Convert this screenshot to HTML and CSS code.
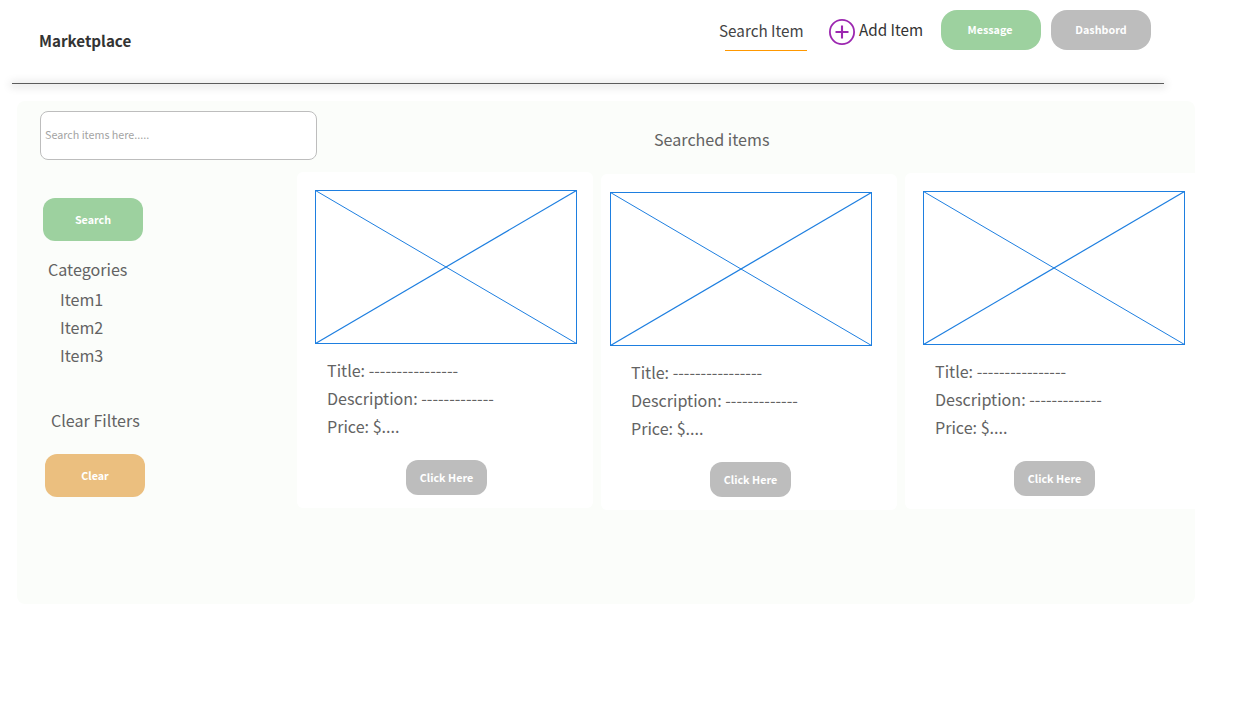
FILE: index.html
```html
<!DOCTYPE html>
<html lang="en">
<head>
<meta charset="utf-8">
<title>Marketplace</title>
<link rel="stylesheet" href="styles.css">
</head>
<body>
<header class="header">
  <h1 class="brand">Marketplace</h1>
  <nav class="nav">
    <a class="nav-search">Search Item</a>
    <a class="nav-add">
      <svg class="plus" width="26" height="26" viewBox="0 0 26 26" fill="none" stroke="#9c27b0"><circle cx="13" cy="13" r="12.1" stroke-width="1.8"/><path d="M13 6.5v13M6.5 13h13" stroke-width="2.1"/></svg>
      <span class="add-label">Add Item</span>
    </a>
    <button class="btn btn-nav btn-message green">Message</button>
    <button class="btn btn-nav gray">Dashbord</button>
  </nav>
</header>
<div class="rule"></div>
<main class="panel">
  <div class="topbar">
    <input class="search-box" type="text" placeholder="Search items here.....">
    <h2 class="heading">Searched items</h2>
  </div>
  <div class="content">
    <aside class="sidebar">
      <button class="btn btn-side green">Search</button>
      <h3 class="side-title">Categories</h3>
      <ul class="items"><li>Item1</li><li>Item2</li><li>Item3</li></ul>
      <h3 class="side-title clear-title">Clear Filters</h3>
      <button class="btn btn-side orange">Clear</button>
    </aside>
    <section class="cards">
      <article class="card">
        <svg class="image" viewBox="0 0 262 154"><rect x=".5" y=".5" width="261" height="153"/><path d="M.5.5l261 153"/><path class="rising" d="M.5 153.5L261.5.5"/></svg>
        <div class="info"><p>Title: ----------------</p><p>Description: -------------</p><p>Price: $....</p></div>
        <button class="btn btn-card gray">Click Here</button>
      </article>
      <article class="card card-second">
        <svg class="image" viewBox="0 0 262 154"><rect x=".5" y=".5" width="261" height="153"/><path d="M.5.5l261 153"/><path class="rising" d="M.5 153.5L261.5.5"/></svg>
        <div class="info"><p>Title: ----------------</p><p>Description: -------------</p><p>Price: $....</p></div>
        <button class="btn btn-card gray">Click Here</button>
      </article>
      <article class="card card-third">
        <svg class="image" viewBox="0 0 262 154"><rect x=".5" y=".5" width="261" height="153"/><path d="M.5.5l261 153"/><path class="rising" d="M.5 153.5L261.5.5"/></svg>
        <div class="info"><p>Title: ----------------</p><p>Description: -------------</p><p>Price: $....</p></div>
        <button class="btn btn-card gray">Click Here</button>
      </article>
    </section>
  </div>
</main>
</body>
</html>
```
FILE: styles.css
```css
* { box-sizing: border-box; }
body { margin: 0; background: #fff; color: #636363; font: 16.1px/28px "Noto Sans CJK SC", sans-serif; }
h1, h2, h3, p, ul { margin: 0; padding: 0; font-size: inherit; font-weight: 400; }
ul { list-style: none; }
.header { display: flex; justify-content: space-between; width: 1152px; height: 83px; margin-left: 12px; padding: 10px 13px 0 27px; }
.rule { width: 1152px; height: 1px; margin-left: 12px; background: #5c5c5c; box-shadow: 0 1px 8px 2px rgba(0,0,0,.13); }
.brand { margin-top: 16px; color: #333; font-size: 15.2px; font-weight: 700; }
.nav { display: flex; align-items: flex-start; color: #444; font-size: 15.25px; }
.nav-search { width: 110px; margin-top: 6px; white-space: nowrap; }
.nav-search::after { content: ""; display: block; width: 82px; height: 1px; margin: 6px 0 0 5.5px; background: #ff9800; }
.nav-add { display: flex; width: 112px; color: #333; }
.plus { flex: none; margin-top: 9px; }
.add-label { margin: 5px 0 0 4px; white-space: nowrap; }
.btn { display: flex; align-items: center; justify-content: center; padding: 0; border: 0; border-radius: 12px; color: #fff; font: 700 10.74px/16px "Noto Sans CJK SC", sans-serif; white-space: nowrap; }
.btn-nav { width: 100px; height: 40px; padding-bottom: 1px; border-radius: 16px; }
.btn-message { padding-right: 2px; }
.btn-nav + .btn-nav { margin-left: 10px; }
.green { background: #9dd19f; }
.gray { background: #bdbdbd; }
.orange { background: #ebbf7f; }
.panel { width: 1178px; height: 503px; margin: 17px 0 0 17px; background: #fbfdfa; border-radius: 8px; overflow: hidden; }
.topbar { display: flex; height: 71px; padding: 10px 0 0 23px; }
.search-box { width: 277px; height: 49px; padding: 0 4px 3px; border: 1px solid #bdbdbd; border-radius: 8px; background: #fff; font: 10.74px/16px "Noto Sans CJK SC", sans-serif; }
.search-box::placeholder { color: #a3a3a3; opacity: 1; }
.heading { margin: 14px 0 0 337px; }
.content { display: flex; }
.sidebar { flex: none; width: 280px; padding: 26px 0 0 26px; }
.btn-side { width: 100px; height: 43px; padding-top: 1px; }
.side-title { margin: 14px 0 0 5px; }
.items { margin: 2px 0 0 17px; }
.clear-title { margin: 37px 0 20px 8px; }
.orange { margin-left: 2px; }
.cards { flex: none; display: flex; align-items: flex-start; gap: 8px; }
.card { width: 296px; height: 336px; padding-top: 18px; background: #fff; border-radius: 6px; }
.card-second { margin-top: 2px; }
.card-third { margin-top: 1px; }
.image { display: block; width: 262px; height: 154px; margin-left: 18px; fill: none; stroke: #1e7fe0; stroke-width: 1; }
.image .rising { stroke-width: 1.2; }
.card-second .image { margin-left: 9px; }
.info { margin: 12px 0 0 30px; white-space: nowrap; }
.btn-card { width: 81px; height: 35px; margin: 20px 0 0 109px; padding-top: 1px; }
```
